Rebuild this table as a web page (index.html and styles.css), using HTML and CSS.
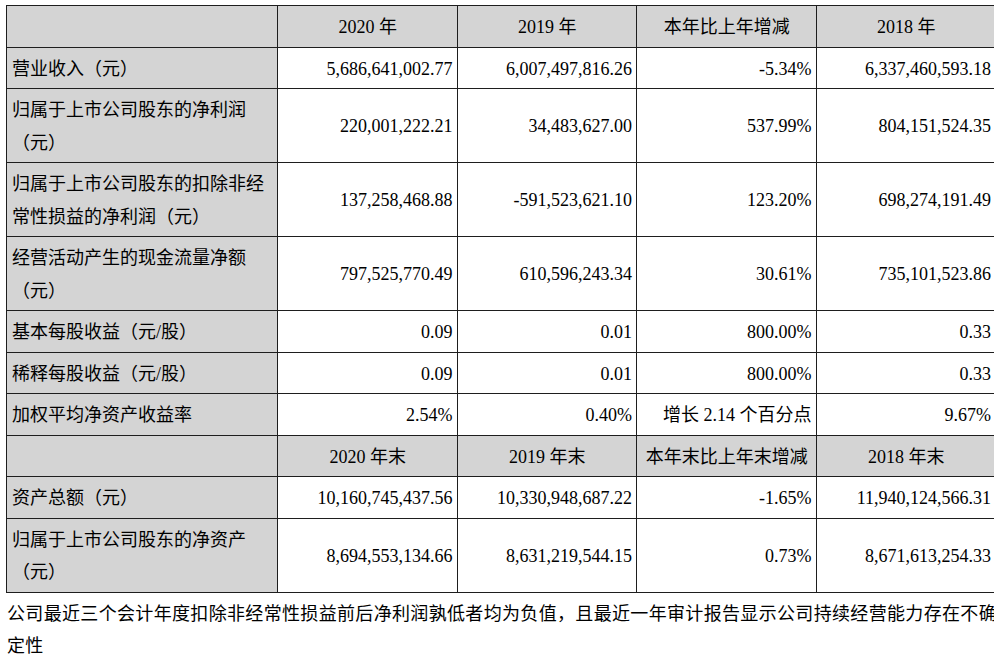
FILE: index.html
```html
<!DOCTYPE html>
<html lang="zh-CN">
<head>
<meta charset="utf-8">
<title>主要会计数据</title>
<link rel="stylesheet" href="styles.css">
</head>
<body>
<table class="fin">
  <colgroup>
    <col class="c-label">
    <col class="c-num">
    <col class="c-num">
    <col class="c-num">
    <col class="c-num">
  </colgroup>
  <tbody>
    <tr class="head">
      <td class="label"></td>
      <td>2020 年</td>
      <td>2019 年</td>
      <td>本年比上年增减</td>
      <td>2018 年</td>
    </tr>
    <tr>
      <td class="label">营业收入（元）</td>
      <td>5,686,641,002.77</td>
      <td>6,007,497,816.26</td>
      <td>-5.34%</td>
      <td>6,337,460,593.18</td>
    </tr>
    <tr>
      <td class="label">归属于上市公司股东的净利润<br>（元）</td>
      <td>220,001,222.21</td>
      <td>34,483,627.00</td>
      <td>537.99%</td>
      <td>804,151,524.35</td>
    </tr>
    <tr>
      <td class="label">归属于上市公司股东的扣除非经<br>常性损益的净利润（元）</td>
      <td>137,258,468.88</td>
      <td>-591,523,621.10</td>
      <td>123.20%</td>
      <td>698,274,191.49</td>
    </tr>
    <tr>
      <td class="label">经营活动产生的现金流量净额<br>（元）</td>
      <td>797,525,770.49</td>
      <td>610,596,243.34</td>
      <td>30.61%</td>
      <td>735,101,523.86</td>
    </tr>
    <tr>
      <td class="label">基本每股收益（元/股）</td>
      <td>0.09</td>
      <td>0.01</td>
      <td>800.00%</td>
      <td>0.33</td>
    </tr>
    <tr>
      <td class="label">稀释每股收益（元/股）</td>
      <td>0.09</td>
      <td>0.01</td>
      <td>800.00%</td>
      <td>0.33</td>
    </tr>
    <tr>
      <td class="label">加权平均净资产收益率</td>
      <td>2.54%</td>
      <td>0.40%</td>
      <td>增长 2.14 个百分点</td>
      <td>9.67%</td>
    </tr>
    <tr class="head">
      <td class="label"></td>
      <td>2020 年末</td>
      <td>2019 年末</td>
      <td>本年末比上年末增减</td>
      <td>2018 年末</td>
    </tr>
    <tr>
      <td class="label">资产总额（元）</td>
      <td>10,160,745,437.56</td>
      <td>10,330,948,687.22</td>
      <td>-1.65%</td>
      <td>11,940,124,566.31</td>
    </tr>
    <tr>
      <td class="label">归属于上市公司股东的净资产<br>（元）</td>
      <td>8,694,553,134.66</td>
      <td>8,631,219,544.15</td>
      <td>0.73%</td>
      <td>8,671,613,254.33</td>
    </tr>
  </tbody>
</table>
<p class="note">公司最近三个会计年度扣除非经常性损益前后净利润孰低者均为负值，且最近一年审计报告显示公司持续经营能力存在不确定性</p>
</body>
</html>
```
FILE: styles.css
```css
html, body {
  background: #ffffff;
}
body {
  margin: 5px 8px 0 6px;
  font-family: "Liberation Serif", "Noto Sans CJK SC", serif;
  font-size: 18px;
  color: #000000;
}
.fin {
  border-collapse: collapse;
  table-layout: fixed;
  width: 989px;
}
.c-label { width: 271px; }
.c-num { width: 179.5px; }
.fin td {
  border: 1px solid #1e1e1e;
  padding: 5px 4px 3px 5px;
  line-height: 32.5px;
  text-align: right;
  vertical-align: middle;
  white-space: nowrap;
}
.fin td.label {
  text-align: left;
  background: #d4d4d4;
}
.fin tr.head td {
  background: #d4d4d4;
  text-align: center;
}
.note {
  margin: 5px 0 0 1px;
  width: 990px;
  line-height: 32px;
  letter-spacing: 0.3px;
  text-align: justify;
}
```
